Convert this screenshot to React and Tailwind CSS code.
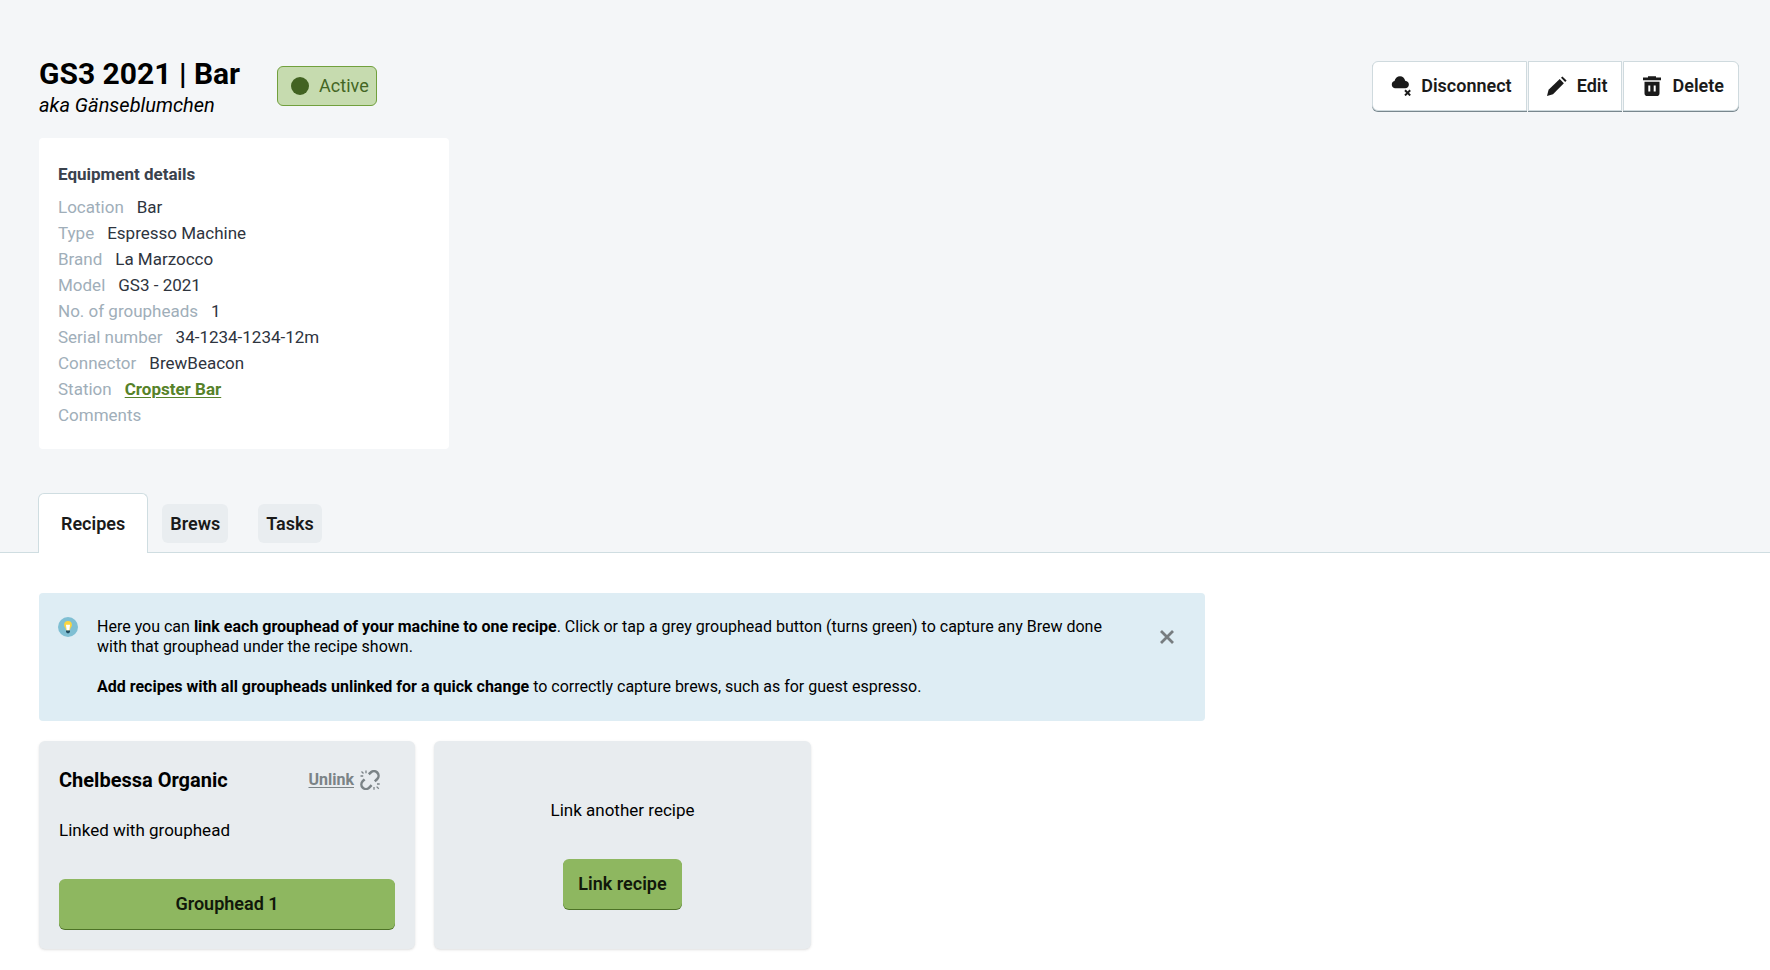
import React, { useState } from "react";

const details = [
  { label: "Location", value: "Bar" },
  { label: "Type", value: "Espresso Machine" },
  { label: "Brand", value: "La Marzocco" },
  { label: "Model", value: "GS3 - 2021" },
  { label: "No. of groupheads", value: "1" },
  { label: "Serial number", value: "34-1234-1234-12m" },
  { label: "Connector", value: "BrewBeacon" },
  { label: "Station", value: "Cropster Bar", href: "#station" },
  { label: "Comments", value: "" },
];

const tabs = ["Recipes", "Brews", "Tasks"];

function DisconnectIcon() {
  return (
    <svg viewBox="0 0 20 20" className="h-5 w-5" fill="currentColor" aria-hidden="true">
      <path d="M3.800 12.200A3.700 3.700 0 0 1 3.500 5C4.300 2 6.300.300 9 .300c2.700 0 4.600 1.800 5.200 4.500 2.200.200 3.700 1.700 3.700 3.700 0 2.200-1.600 3.700-3.800 3.700z" />
      <path d="M14 14.200l5.200 5.200M19.200 14.200L14 19.400" stroke="currentColor" strokeWidth="2" />
    </svg>
  );
}

function EditIcon() {
  return (
    <svg viewBox="0 0 20 20" className="h-5 w-5" fill="currentColor" aria-hidden="true">
      <path d="M0 20l1.600-6.200L12.700 3l4.200 4.200L6 18.200z" />
      <path d="M14 1.800L15.400.400l4.200 4.200-1.400 1.400z" />
    </svg>
  );
}

function DeleteIcon() {
  return (
    <svg viewBox="0 0 20 20" className="h-5 w-5" fill="currentColor" aria-hidden="true">
      <path d="M1 1.600h5V.200h8v1.400h5v2.600H1z" />
      <path
        fillRule="evenodd"
        d="M2.500 5.800h15v11.400a2.800 2.800 0 0 1-2.800 2.800H5.300a2.800 2.800 0 0 1-2.800-2.800zM6.300 9.600v6h2v-6zM11.700 9.600v6h2v-6z"
      />
    </svg>
  );
}

function UnlinkIcon() {
  return (
    <svg viewBox="0 0 20 20" className="h-5 w-5" fill="none" stroke="currentColor" aria-hidden="true">
      <path strokeWidth="2.500" d="M8.800 4.200l1.900-1.700a4.600 4.600 0 0 1 6.500 0 4.600 4.600 0 0 1 0 6.500l-2.400 2.300" />
      <path strokeWidth="2.500" d="M4.600 9.300L2.700 11.200a4.600 4.600 0 0 0 0 6.400 4.600 4.600 0 0 0 6.500 0l2.400-2.400" />
      <path strokeWidth="1.300" d="M1.500 1.500l2 2M6 .500v2.700M.500 6h2.700M18.800 18.800l-2.200-2.200M14 17v2.700M17 14h2.700" />
    </svg>
  );
}

function BulbIcon() {
  return (
    <svg viewBox="0 0 20 20" className="h-5 w-5 shrink-0" aria-hidden="true">
      <circle cx="10" cy="10" r="10" fill="#7fbfd3" />
      <path fill="#fcd53f" d="M10 3.900a3.900 3.900 0 0 0-3.900 3.900c0 1.700.900 2.500 1.500 3.700l.5 2h3.800l.5-2c.6-1.200 1.500-2 1.500-3.700A3.900 3.900 0 0 0 10 3.900z" />
      <path fill="#fff" d="M8 7.800h4l-.7 5.700H8.700z" />
      <path fill="#1f4a5e" d="M8 13.500h4v1.600l-1.200 1.200H9.200L8 15.100z" />
    </svg>
  );
}

function CloseIcon() {
  return (
    <svg viewBox="0 0 14 14" className="h-3.5 w-3.5" stroke="currentColor" strokeWidth="2.800" aria-hidden="true">
      <path d="M1 1l12 12M13 1L1 13" />
    </svg>
  );
}

const actionButton =
  "flex h-[50px] items-center gap-2.5 border border-[#cfdade] bg-white pr-3.5 pl-[18px] text-lg font-semibold text-[#1a1a1a] shadow-[0_1px_0_#78878e] hover:bg-gray-50";

const greenButton =
  "h-[50px] rounded-md bg-[#8eb760] text-lg font-semibold text-[#11180a] shadow-[0_1px_0_#4d7326] hover:bg-[#82ab54]";

export default function App() {
  const [activeTab, setActiveTab] = useState("Recipes");
  const [showHint, setShowHint] = useState(true);

  return (
    <div className="min-h-screen bg-white font-['Roboto',sans-serif] text-black">
      <header className="bg-[#f4f6f8] pt-14">
        <div className="flex items-start justify-between pr-[31px] pl-[39px]">
          <div className="flex items-start gap-[37px]">
            <div>
              <h1 className="text-[30px] leading-9 font-bold">GS3 2021 | Bar</h1>
              <p className="text-xl leading-[26px] italic">aka Gänseblumchen</p>
            </div>
            <div className="mt-2.5 flex h-10 items-center gap-2.5 rounded-md border border-[#71a03d] bg-[#c6dbaf] pr-[7px] pl-[13px] text-lg text-[#446624]">
              <span className="h-[18px] w-[18px] rounded-full bg-[#426322]" />
              Active
            </div>
          </div>

          <div className="mt-[5px] flex gap-px">
            <button type="button" className={`${actionButton} rounded-l-md`}>
              <DisconnectIcon />
              Disconnect
            </button>
            <button type="button" className={actionButton}>
              <EditIcon />
              Edit
            </button>
            <button type="button" className={`${actionButton} rounded-r-md`}>
              <DeleteIcon />
              Delete
            </button>
          </div>
        </div>

        <section className="mt-5 ml-[39px] w-[410px] max-w-full rounded bg-white px-[19px] pt-6 pb-[21px]">
          <h2 className="mb-2 text-[17px] leading-6 font-bold text-[#3a424d]">Equipment details</h2>
          <dl className="text-[17px] leading-[26px]">
            {details.map((item) => (
              <div key={item.label} className="flex gap-[13px]">
                <dt className="text-[#a0aeb9]">{item.label}</dt>
                <dd className="text-[#2e343e]">
                  {item.href ? (
                    <a href={item.href} className="font-bold text-[#568229] underline decoration-1 underline-offset-2">
                      {item.value}
                    </a>
                  ) : (
                    item.value
                  )}
                </dd>
              </div>
            ))}
          </dl>
        </section>

        <nav className="mt-11 flex items-end border-b border-[#cfdde1] pl-[38px]" role="tablist">
          {tabs.map((tab) => (
            <button
              key={tab}
              type="button"
              role="tab"
              aria-selected={activeTab === tab}
              onClick={() => setActiveTab(tab)}
              className={
                activeTab === tab
                  ? "-mb-px mr-3.5 h-[60px] rounded-t-md border border-b-0 border-[#cfdde1] bg-white px-[22px] text-lg font-semibold text-[#1a1a1a]"
                  : "mr-[30px] mb-[9px] h-[39px] rounded-md bg-[#e9edf0] px-2 text-lg font-semibold text-[#1a1a1a]"
              }
            >
              {tab}
            </button>
          ))}
        </nav>
      </header>

      <main className="px-[39px] pt-10 pb-5">
        {showHint && (
          <div className="mb-5 flex max-w-[1166px] items-start rounded bg-[#deedf4] py-6 pr-[25px] pl-[19px]">
            <BulbIcon />
            <div className="ml-[19px] flex-1 text-base leading-5">
              <p>
                Here you can <strong className="font-bold">link each grouphead of your machine to one recipe</strong>.
                Click or tap a grey grouphead button (turns green) to capture any Brew done with that grouphead under
                the recipe shown.
              </p>
              <p className="mt-5">
                <strong className="font-bold">Add recipes with all groupheads unlinked for a quick change</strong> to
                correctly capture brews, such as for guest espresso.
              </p>
            </div>
            <button
              type="button"
              aria-label="Close"
              onClick={() => setShowHint(false)}
              className="mt-[7px] ml-[42px] p-1.5 text-[#777d80] hover:text-black"
            >
              <CloseIcon />
            </button>
          </div>
        )}

        <div className="flex flex-wrap gap-[19px]">
          <article className="flex h-52 w-[376px] flex-col rounded-md bg-[#e8ecef] px-5 pb-5 shadow">
            <div className="flex items-center justify-between pt-[25px] pr-[15px]">
              <h3 className="text-xl leading-7 font-bold">Chelbessa Organic</h3>
              <button type="button" className="flex items-center gap-1.5 text-base font-bold text-[#7b8386]">
                <span className="underline decoration-1 underline-offset-2">Unlink</span>
                <UnlinkIcon />
              </button>
            </div>
            <p className="mt-6 text-[17px] leading-6">Linked with grouphead</p>
            <button type="button" className={`${greenButton} mt-auto w-full`}>
              Grouphead 1
            </button>
          </article>

          <article className="flex h-52 w-[377px] flex-col items-center rounded-md bg-[#e8ecef] pt-[57px] shadow">
            <p className="text-[17px] leading-6">Link another recipe</p>
            <button type="button" className={`${greenButton} mt-[37px] px-[15px]`}>
              Link recipe
            </button>
          </article>
        </div>
      </main>
    </div>
  );
}
